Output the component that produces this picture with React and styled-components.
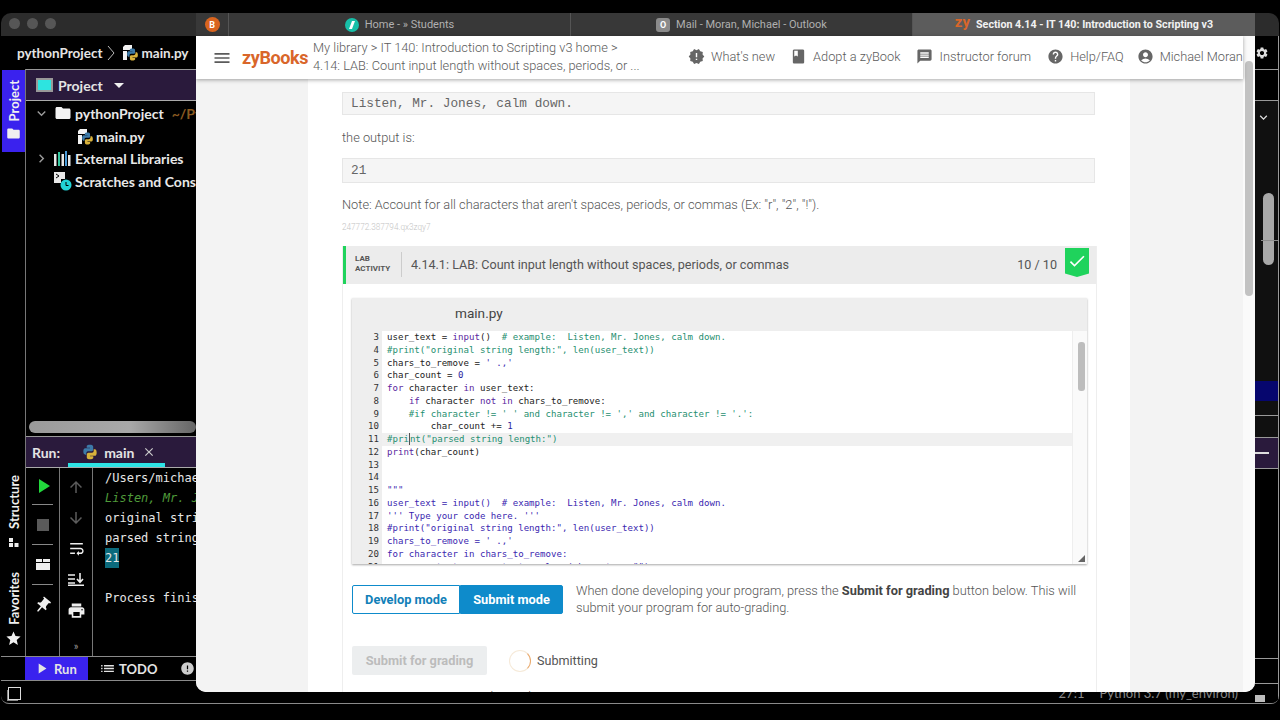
import React from "react";
import styled, { createGlobalStyle } from "styled-components";
import {
  MdNewReleases,
  MdBook,
  MdMessage,
  MdHelp,
  MdAccountCircle,
  MdSettings,
  MdMenu,
  MdCheck,
  MdStar,
  MdFolder,
  MdPushPin,
  MdPrint,
  MdArrowUpward,
  MdArrowDownward,
  MdWrapText,
  MdClose,
  MdKeyboardArrowDown,
  MdKeyboardArrowRight,
  MdError,
  MdPlayArrow,
  MdList,
} from "react-icons/md";

const GlobalStyle = createGlobalStyle`
  html, body { margin: 0; padding: 0; background: #000; }
  body { width: 1280px; height: 720px; overflow: hidden; font-family: "Roboto", sans-serif; }
`;

const Desktop = styled.div`
  position: relative;
  width: 1280px;
  height: 720px;
  background: #000;
  overflow: hidden;
`;

/* ---------- IDE window behind the browser ---------- */
const IdeWindow = styled.div`
  position: absolute;
  left: 1px;
  top: 13px;
  width: 1278px;
  height: 690px;
  border-bottom: 1px solid #8a8a8a;
  border-radius: 10px 10px 8px 8px;
  background: #000;
  display: flex;
  flex-direction: column;
  overflow: hidden;
  color: #e4e4e4;
  font-family: "Lato", sans-serif;
`;
const IdeTitle = styled.div`
  height: 23px;
  flex: none;
  box-sizing: border-box;
  padding: 0 0 2px 8px;
  background: #2c2c2c;
  display: flex;
  align-items: center;
  gap: 7px;
`;
const Dot = styled.span`
  width: 11px;
  height: 11px;
  border-radius: 50%;
  background: #565656;
`;
const IdeBody = styled.div`
  flex: 1;
  min-height: 0;
  display: flex;
`;
const LeftPane = styled.div`
  width: 195px;
  flex: none;
  display: flex;
  flex-direction: column;
  overflow: hidden;
`;
const Crumb = styled.div`
  height: 33px;
  flex: none;
  display: flex;
  align-items: center;
  padding-left: 16px;
  font-size: 13.5px;
  font-weight: 700;
  white-space: nowrap;
  & > svg { flex: none; }
`;
const CrumbFile = styled.span`
  margin-left: 2px;
`;
const IdeMain = styled.div`
  flex: 1;
  min-height: 0;
  display: flex;
`;
const Stripe = styled.div`
  width: 24px;
  flex: none;
  display: flex;
  flex-direction: column;
  padding-top: 1px;
  padding-left: 1px;
  box-sizing: border-box;
`;
const StripeTab = styled.div`
  display: flex;
  flex-direction: column;
  align-items: center;
  gap: ${(p) => p.$gap || 5}px;
  font-size: 13px;
  font-weight: 700;
  color: #f0f0f0;
  background: ${(p) => (p.$active ? "#3a22ee" : "transparent")};
  padding-top: ${(p) => (p.$active ? 10 : 0)}px;
  height: ${(p) => (p.$active ? "82px" : "auto")};
  box-sizing: border-box;
  margin-top: ${(p) => p.$mt || 0};
  margin-bottom: ${(p) => p.$mb || 0}px;
`;
const VerticalText = styled.span`
  writing-mode: vertical-rl;
  transform: rotate(180deg);
  line-height: 22px;
`;
const Panels = styled.div`
  flex: 1;
  min-width: 0;
  display: flex;
  flex-direction: column;
  border-left: 1px solid #777;
  border-top: 1px solid #999;
`;
const ProjectPanel = styled.div`
  flex: 1;
  min-height: 0;
  display: flex;
  flex-direction: column;
`;
const ProjectHead = styled.div`
  height: 30px;
  flex: none;
  background: #2a1a3c;
  border-bottom: 1px solid #aaa;
  display: flex;
  align-items: center;
  padding-left: 10px;
  font-size: 14px;
  font-weight: 700;
  white-space: nowrap;
`;
const WindowIcon = styled.span`
  width: 13px;
  height: 10px;
  background: #2de4e0;
  border: 2px solid #999;
  margin-right: 5px;
`;
const Caret = styled.span`
  width: 0;
  height: 0;
  border-left: 5px solid transparent;
  border-right: 5px solid transparent;
  border-top: 5px solid #f0f0f0;
  margin-left: 11px;
`;
const Tree = styled.div`
  flex: 1;
  padding-top: 1px;
`;
const TreeRow = styled.div`
  height: 22.7px;
  display: flex;
  align-items: center;
  font-size: 14px;
  font-weight: 700;
  white-space: nowrap;
  padding-left: ${(p) => p.$indent}px;
  color: #e8e8e8;
  & > svg { flex: none; }
`;
const TreeSlot = styled.span`
  width: 21px;
  flex: none;
  display: flex;
  color: #999;
`;
const TreeLabel = styled.span`
  margin-left: ${(p) => p.$ml}px;
`;
const Muted = styled.span`
  color: #8a5a20;
  margin-left: 8px;
`;
const HScroll = styled.div`
  height: 12px;
  flex: none;
  margin: 0 0 3px 3px;
  border-radius: 6px;
  background: linear-gradient(90deg, #9a9a9a 0%, #a8a8a8 60%, #666 100%);
`;
const RunPanel = styled.div`
  height: 219px;
  flex: none;
  display: flex;
  flex-direction: column;
  border-top: 1px solid #999;
`;
const RunHead = styled.div`
  height: 30px;
  flex: none;
  background: #2a1a3c;
  border-bottom: 1px solid #aaa;
  display: flex;
  align-items: center;
  padding-left: 6px;
  font-size: 14px;
  font-weight: 700;
  white-space: nowrap;
  position: relative;
`;
const RunTab = styled.div`
  display: flex;
  align-items: center;
  gap: 6px;
  margin-left: 22px;
`;
const RunUnderline = styled.span`
  position: absolute;
  left: 42px;
  bottom: 0;
  width: 97px;
  height: 4px;
  background: #2de4e6;
`;
const RunBody = styled.div`
  flex: 1;
  min-height: 0;
  display: flex;
`;
const ToolCol = styled.div`
  width: ${(p) => p.$w}px;
  flex: none;
  border-right: 1px solid #777;
  display: flex;
  flex-direction: column;
  align-items: center;
  padding-top: 4px;
  color: #eee;
`;
const ToolSlot = styled.div`
  height: ${(p) => p.$h}px;
  flex: none;
  margin-top: ${(p) => p.$mt || 0}px;
  display: flex;
  align-items: center;
  justify-content: center;
  color: ${(p) => p.$color || "inherit"};
`;
const ToolRule = styled.span`
  display: block;
  width: 21px;
  height: 1px;
  margin: 5px 0;
  background: #888;
`;
const StopBox = styled.span`
  width: 12px;
  height: 12px;
  background: #5a5a5a;
`;
const LayoutIcon = styled.span`
  width: 14px;
  height: 11px;
  display: grid;
  grid-template-columns: 1fr 1fr;
  grid-template-rows: 1fr 2fr;
  gap: 1px;
  & > i { background: #eee; display: block; }
  & > i:last-child { grid-column: 1 / 3; }
`;
const MoreMark = styled.span`
  font-size: 11px;
  color: #999;
`;
const Console = styled.div`
  flex: 1;
  padding-left: 12px;
  font-family: "DejaVu Sans Mono", monospace;
  font-size: 12px;
  line-height: 20px;
  white-space: pre;
  overflow: hidden;
  color: #e6e6e6;
`;
const ConsoleLine = styled.div`
  height: 20px;
  color: ${(p) => p.$color || "inherit"};
  font-style: ${(p) => (p.$italic ? "italic" : "normal")};
`;
const Selected = styled.span`
  background: #0c6a7c;
  display: inline-block;
`;
const ToolBar = styled.div`
  height: 23px;
  flex: none;
  border-top: 1px solid #8a8a8a;
  border-bottom: 1px solid #8a8a8a;
  display: flex;
  align-items: center;
  font-size: 13px;
  font-weight: 700;
  white-space: nowrap;
`;
const RunButton = styled.div`
  margin-left: 24px;
  width: 63px;
  flex: none;
  height: 100%;
  background: #3a22ee;
  display: flex;
  align-items: center;
  gap: 4px;
  padding-left: 8px;
  box-sizing: border-box;
`;
const TodoItem = styled.div`
  display: flex;
  align-items: center;
  gap: 3px;
  margin-left: ${(p) => p.$ml}px;
`;
const BottomBar = styled.div`
  height: 22px;
  flex: none;
  display: flex;
  align-items: center;
  padding-left: 7px;
`;
const SquareIcon = styled.span`
  width: 11px;
  height: 11px;
  border: 1px solid #ddd;
  margin-top: 2px;
  box-shadow: -2px 2px 0 -1px #888;
`;
const IdeFiller = styled.div`
  flex: 1;
  display: flex;
  justify-content: flex-end;
  align-items: flex-end;
  padding: 0 17px 2px 0;
  font-size: 13px;
  line-height: 16px;
  color: #8a8a8a;
  gap: 15px;
  white-space: nowrap;
`;
const RightStrip = styled.div`
  width: 24px;
  flex: none;
  display: flex;
  flex-direction: column;
  color: #ddd;
  border-right: 1px solid #999;
  box-sizing: border-box;
`;
const StripBlock = styled.div`
  height: ${(p) => p.$h}px;
  flex: none;
  background: ${(p) => p.$bg || "#000"};
  border-bottom: ${(p) => (p.$noLine ? "none" : "1px solid #999")};
  display: flex;
  position: relative;
  overflow: hidden;
`;
const StripThumb = styled.span`
  position: absolute;
  left: 8px;
  top: 92px;
  width: 11px;
  height: 72px;
  border-radius: 6px;
  background: #a8a8a8;
`;
const StripMark = styled.span`
  position: absolute;
  left: 6px;
  right: 0;
  top: 139px;
  height: 1px;
  background: #8c8c8c;
`;
const StripBlue = styled.span`
  position: absolute;
  left: 0;
  right: 0;
  top: 280px;
  height: 20px;
  background: #06066e;
`;
const StripDash = styled.span`
  width: 14px;
  height: 2px;
  background: #ddd;
  align-self: center;
`;
const LockBody = styled.span`
  width: 10px;
  height: 7px;
  margin: 11px 0 0 0;
  background: #bdbdbd;
`;

/* ---------- browser window ---------- */
const BrowserWindow = styled.div`
  position: absolute;
  left: 196px;
  top: 13px;
  width: 1059px;
  height: 679px;
  display: flex;
  flex-direction: column;
  border-radius: 0 0 10px 10px;
  overflow: hidden;
  background: #fff;
`;
const TabBar = styled.div`
  height: 23px;
  flex: none;
  display: flex;
  background: #383838;
  font-family: "Roboto", sans-serif;
  font-size: 11px;
  color: #b0b0b0;
`;
const PinnedTab = styled.div`
  width: 33px;
  flex: none;
  border-right: 1px solid #555;
  display: flex;
  align-items: center;
  justify-content: center;
  box-sizing: border-box;
`;
const BrowserTab = styled.div`
  width: 342px;
  flex: none;
  display: flex;
  align-items: center;
  justify-content: center;
  gap: 6px;
  box-sizing: border-box;
  border-right: ${(p) => (p.$last ? "none" : "1px solid #555")};
  background: ${(p) => (p.$active ? "#5c5c5c" : "transparent")};
  color: ${(p) => (p.$active ? "#f2f2f2" : "#b0b0b0")};
  font-weight: ${(p) => (p.$active ? 700 : 400)};
  font-size: ${(p) => (p.$active ? 10.7 : 11)}px;
  white-space: nowrap;
`;
const Favicon = styled.span`
  width: ${(p) => p.$size || 14}px;
  height: ${(p) => p.$size || 14}px;
  flex: none;
  display: flex;
  align-items: center;
  justify-content: center;
  color: #fff;
  font-size: 9px;
  font-weight: 700;
  background: ${(p) => p.$bg};
  border-radius: ${(p) => p.$radius || "50%"};
`;
const ZyMark = styled.span`
  color: #d9662a;
  font-size: 15px;
  font-weight: 700;
  margin-top: -5px;
`;
const BrowserContent = styled.div`
  flex: 1;
  min-height: 0;
  display: flex;
`;
const Page = styled.div`
  width: 1047px;
  flex: none;
  display: flex;
  flex-direction: column;
`;
const Nav = styled.div`
  height: 43px;
  flex: none;
  display: flex;
  align-items: center;
  padding-left: 16px;
  background: #fff;
  box-shadow: 0 1px 4px rgba(0, 0, 0, 0.35);
  position: relative;
  z-index: 2;
  overflow: hidden;
  color: #5b5b5b;
  font-size: 12.8px;
  font-weight: 300;
  white-space: nowrap;
  & > * { flex: none; }
`;
const Logo = styled.span`
  margin-left: 10px;
  width: 65px;
  color: #d9662a;
  font-size: 18px;
  font-weight: 700;
  letter-spacing: -0.4px;
`;
const NavCrumb = styled.div`
  margin: -2px 0 0 6px;
  width: 375px;
  line-height: 18px;
`;
const NavLinks = styled.div`
  display: flex;
  align-items: center;
  gap: 16px;
  margin-top: -2px;
`;
const NavLink = styled.div`
  display: flex;
  align-items: center;
  gap: 6px;
  margin-left: ${(p) => p.$ml || 0}px;
  & svg { color: #666; flex: none; }
`;
const Scrolled = styled.div`
  flex: 1;
  min-height: 0;
  display: grid;
  grid-template-columns: 112px 822px 113px;
  overflow: hidden;
`;
const Gutter = styled.div`
  background: #f3f3f3;
`;
const Center = styled.div`
  background: #fff;
  padding: 13px 0 0 34px;
  color: #5a5a5a;
  font-size: 12.8px;
  font-weight: 300;
`;
const OutputBox = styled.div`
  width: 753px;
  box-sizing: border-box;
  height: ${(p) => p.$h}px;
  background: #f5f5f5;
  border: 1px solid #e6e6e6;
  padding-left: 8px;
  display: flex;
  align-items: center;
  font-family: "Liberation Mono", monospace;
  font-size: 12.75px;
  color: #666;
`;
const Para = styled.p`
  margin: ${(p) => p.$m};
  line-height: 18px;
  font-weight: 300;
  color: #555;
`;
const TinyTag = styled.div`
  margin-top: 7px;
  font-size: 8.2px;
  line-height: 12px;
  color: #c4c4c4;
`;
const Activity = styled.div`
  margin-top: 13px;
  width: 755px;
  border-right: 1px solid #eee;
  border-left: 1px solid #eee;
  box-sizing: border-box;
`;
const ActivityHead = styled.div`
  height: 38px;
  box-sizing: border-box;
  padding: 0 0 2px 9px;
  background: #ececec;
  border-left: 3px solid #1fd35c;
  display: flex;
  align-items: center;
  color: #555;
`;
const LabTag = styled.div`
  width: 37px;
  flex: none;
  font-size: 8px;
  line-height: 10px;
  font-weight: 700;
  color: #555;
  padding-right: 9px;
  border-right: 1px solid #ccc;
  height: 25px;
  display: flex;
  align-items: center;
`;
const ActivityTitle = styled.div`
  margin-left: 9px;
  flex: 1;
  font-size: 12.6px;
  font-weight: 400;
`;
const Score = styled.div`
  font-size: 12.6px;
  font-weight: 400;
  margin-right: 8px;
`;
const Badge = styled.div`
  width: 24px;
  height: 29px;
  margin-right: 7px;
  align-self: flex-start;
  margin-top: 2px;
  background: #1fd35c;
  clip-path: polygon(0 0, 100% 0, 100% 88%, 50% 100%, 0 88%);
  display: flex;
  justify-content: center;
  padding-top: 3px;
  box-sizing: border-box;
  color: #fff;
`;
const ActivityBody = styled.div`
  padding: 14px 9px 0 9px;
`;
const Editor = styled.div`
  width: 735px;
  box-shadow: 0 1px 2px rgba(0, 0, 0, 0.35);
`;
const EditorHead = styled.div`
  height: 33px;
  box-sizing: border-box;
  background: #eee;
  padding: 0 0 4px 103px;
  display: flex;
  align-items: center;
  font-size: 13.6px;
  font-weight: 400;
  color: #444;
`;
const EditorBody = styled.div`
  height: 233px;
  display: flex;
  position: relative;
  overflow: hidden;
  background: #fff;
`;
const CodeLines = styled.div`
  flex: 1;
  min-width: 0;
  font-family: "DejaVu Sans Mono", monospace;
  font-size: 9.08px;
  overflow: hidden;
`;
const CodeLine = styled.div`
  height: 12.77px;
  line-height: 12.77px;
  display: flex;
  white-space: pre;
  background: ${(p) => (p.$active ? "#f0f0f0" : "transparent")};
`;
const LineNo = styled.span`
  width: 30px;
  flex: none;
  box-sizing: border-box;
  text-align: right;
  padding-right: 3px;
  color: #333;
  background: #eeeeee;
`;
const LineText = styled.span`
  padding-left: 5px;
  color: #222;
`;
const Tok = styled.span`
  color: ${(p) =>
    ({ k: "#5a1fa0", c: "#1f8f70", s: "#3a1fb0", n: "#2a1fa0", b: "#5a1fa0" })[p.$t]};
`;
const Cursor = styled.span`
  display: inline-block;
  width: 0;
  height: 12px;
  border-left: 1px solid #555;
  vertical-align: top;
`;
const CodeScroll = styled.div`
  width: 15px;
  flex: none;
  background: #fafafa;
  border-left: 1px solid #eee;
  padding: 11px 0 0 5px;
  box-sizing: border-box;
`;
const CodeThumb = styled.div`
  width: 7px;
  height: 49px;
  border-radius: 3px;
  background: #bdbdbd;
`;
const ResizeGrip = styled.svg`
  position: absolute;
  right: 2px;
  bottom: 2px;
`;
const ModeRow = styled.div`
  margin-top: 21px;
  display: flex;
  gap: 13px;
`;
const ModeToggle = styled.div`
  display: flex;
  height: 29px;
  width: 211px;
  flex: none;
  font-size: 12.8px;
  font-weight: 700;
`;
const ModeButton = styled.div`
  flex: ${(p) => (p.$on ? "0 0 103px" : "0 0 108px")};
  display: flex;
  align-items: center;
  justify-content: center;
  box-sizing: border-box;
  border: 1px solid #0e8bcb;
  border-radius: ${(p) => (p.$on ? "0 2px 2px 0" : "2px 0 0 2px")};
  background: ${(p) => (p.$on ? "#0e8bcb" : "#fff")};
  color: ${(p) => (p.$on ? "#fff" : "#1180b8")};
`;
const ModeHelp = styled.div`
  width: 505px;
  line-height: 17px;
  margin-top: -3px;
  color: #555;
  b { font-weight: 700; color: #444; }
`;
const SubmitRow = styled.div`
  margin-top: 30px;
  display: flex;
  align-items: center;
`;
const SubmitButton = styled.div`
  width: 135px;
  height: 29px;
  background: #eceeef;
  color: #bcbcbc;
  font-weight: 700;
  font-size: 12.8px;
  display: flex;
  align-items: center;
  justify-content: center;
  border-radius: 2px;
`;
const Spinner = styled.span`
  width: 22px;
  height: 22px;
  box-sizing: border-box;
  margin-left: 22px;
  border-radius: 50%;
  border: 1px solid #f6ead9;
  border-right-color: #e9a96c;
`;
const SubmitLabel = styled.span`
  margin-left: 6px;
  color: #555;
  font-weight: 400;
  font-size: 12.6px;
`;
const WhatIsThis = styled.div`
  margin: 14px 0 0 127px;
  color: #555;
  line-height: 16px;
`;
const PageTrack = styled.div`
  width: 12px;
  flex: none;
  background: #fafafa;
  padding: 25px 0 0 2px;
  box-sizing: border-box;
`;
const PageThumb = styled.div`
  width: 8px;
  height: 235px;
  border-radius: 4px;
  background: #c2c2c2;
`;

const PY_PATH =
  "M11.9 1C6.8 1 7.1 3.2 7.1 3.2v2.3h4.9v.7H5.2S2 5.8 2 11s2.8 5 2.8 5h1.7v-2.4s-.1-2.8 2.8-2.8h4.8s2.7 0 2.7-2.6V4.2S17.2 1 11.9 1z";

const PythonIcon = ({ size = 16 }) => (
  <svg width={size} height={size} viewBox="0 0 24 24">
    <path fill="#3d7aa8" d={PY_PATH} />
    <path fill="#d8b23c" transform="rotate(180 12 12)" d={PY_PATH} />
  </svg>
);

const PyFile = () => (
  <svg width="17" height="17" viewBox="0 0 17 17">
    <path fill="#f2f2f2" d="M3 1h7v5H1V3zM1 7h4v9H1z" />
    <g transform="translate(4 4) scale(0.54)">
      <path fill="#3d7aa8" d={PY_PATH} />
      <path fill="#d8b23c" transform="rotate(180 12 12)" d={PY_PATH} />
    </g>
  </svg>
);

const ThinChevron = () => (
  <svg width="8" height="16" viewBox="0 0 8 16" fill="none" stroke="#bbb" strokeWidth="1" style={{ margin: "0 7px 0 5px" }}>
    <path d="M1 1l6 7-6 7" />
  </svg>
);

const LibIcon = () => (
  <svg width="17" height="15" viewBox="0 0 17 15" fill="#e8e8e8">
    <rect x="0" y="3" width="2.5" height="12" />
    <rect x="4" y="1" width="2" height="14" fill="#35c9a0" />
    <rect x="7.5" y="3" width="2.5" height="12" />
    <rect x="11" y="0" width="2" height="15" fill="#4a9ad8" />
    <rect x="14" y="4" width="2.5" height="11" />
  </svg>
);

const ScratchIcon = () => (
  <svg width="18" height="19" viewBox="0 0 18 19">
    <path fill="#e8e8e8" d="M0 0h11v7H7v4H0z" />
    <path d="M2 2l3 2-3 2" stroke="#000" strokeWidth="1" fill="none" />
    <circle cx="12" cy="13" r="5.5" fill="#22d3d6" />
    <path d="M12 10v3.5h2.5" stroke="#000" strokeWidth="1" fill="none" />
  </svg>
);

const ScrollEndIcon = () => (
  <svg width="16" height="13" viewBox="0 0 16 13" fill="none" stroke="#eee" strokeWidth="1.6">
    <path d="M0 2h7M0 6h7M0 10h7M0 12.2h16M12 0v9M9 6l3 3.4L15 6" />
  </svg>
);

const CODE = [
  [3, [["", "user_text = "], ["b", "input"], ["", "()  "], ["c", "# example:  Listen, Mr. Jones, calm down."]]],
  [4, [["c", '#print("original string length:", len(user_text))']]],
  [5, [["", "chars_to_remove = "], ["s", "' .,'"]]],
  [6, [["", "char_count = "], ["n", "0"]]],
  [7, [["k", "for"], ["", " character "], ["k", "in"], ["", " user_text:"]]],
  [8, [["", "    "], ["k", "if"], ["", " character "], ["k", "not in"], ["", " chars_to_remove:"]]],
  [9, [["c", "    #if character != ' ' and character != ',' and character != '.':"]]],
  [10, [["", "        char_count += "], ["n", "1"]]],
  [11, [["c", "#pri"], ["cursor", ""], ["c", 'nt("parsed string length:")']], true],
  [12, [["b", "print"], ["", "(char_count)"]]],
  [13, []],
  [14, []],
  [15, [["s", '"""']]],
  [16, [["s", "user_text = input()  # example:  Listen, Mr. Jones, calm down."]]],
  [17, [["s", "''' Type your code here. '''"]]],
  [18, [["s", '#print("original string length:", len(user_text))']]],
  [19, [["s", "chars_to_remove = ' .,'"]]],
  [20, [["s", "for character in chars_to_remove:"]]],
  [21, [["s", '    user_text = user_text.replace(character, "")']]],
];

const Ide = () => (
  <IdeWindow>
    <IdeTitle>
      <Dot />
      <Dot />
      <Dot />
    </IdeTitle>
    <IdeBody>
      <LeftPane>
        <Crumb>
          pythonProject
          <ThinChevron />
          <PyFile />
          <CrumbFile>main.py</CrumbFile>
        </Crumb>
        <IdeMain>
          <Stripe>
            <StripeTab $active>
              <VerticalText>Project</VerticalText>
              <MdFolder size={15} />
            </StripeTab>
            <StripeTab $mt="auto" $mb={25} $gap={9}>
              <VerticalText>Structure</VerticalText>
              <svg width="10" height="9" viewBox="0 0 10 9" fill="#eee">
                <rect x="0" y="0" width="4" height="4" />
                <rect x="0" y="5" width="4" height="4" />
                <rect x="5.5" y="5" width="4" height="4" />
              </svg>
            </StripeTab>
            <StripeTab $mb={9}>
              <VerticalText>Favorites</VerticalText>
              <MdStar size={17} />
            </StripeTab>
          </Stripe>
          <Panels>
            <ProjectPanel>
              <ProjectHead>
                <WindowIcon />
                Project
                <Caret />
              </ProjectHead>
              <Tree>
                <TreeRow $indent={7}>
                  <TreeSlot>
                    <MdKeyboardArrowDown size={17} />
                  </TreeSlot>
                  <MdFolder size={18} color="#f2f2f2" />
                  <TreeLabel $ml={3}>pythonProject</TreeLabel>
                  <Muted>~/PycharmProjects</Muted>
                </TreeRow>
                <TreeRow $indent={51}>
                  <PyFile />
                  <TreeLabel $ml={2}>main.py</TreeLabel>
                </TreeRow>
                <TreeRow $indent={7}>
                  <TreeSlot>
                    <MdKeyboardArrowRight size={17} />
                  </TreeSlot>
                  <LibIcon />
                  <TreeLabel $ml={4}>External Libraries</TreeLabel>
                </TreeRow>
                <TreeRow $indent={28}>
                  <ScratchIcon />
                  <TreeLabel $ml={3}>Scratches and Consoles</TreeLabel>
                </TreeRow>
              </Tree>
              <HScroll />
            </ProjectPanel>
            <RunPanel>
              <RunHead>
                Run:
                <RunTab>
                  <PythonIcon />
                  main
                  <MdClose size={14} color="#ccc" style={{ marginLeft: 2 }} />
                </RunTab>
                <RunUnderline />
              </RunHead>
              <RunBody>
                <ToolCol $w={33}>
                  <ToolSlot $h={27} $color="#22d83c">
                    <MdPlayArrow size={24} />
                  </ToolSlot>
                  <ToolRule />
                  <ToolSlot $h={29}>
                    <StopBox />
                  </ToolSlot>
                  <ToolRule />
                  <ToolSlot $h={29}>
                    <LayoutIcon>
                      <i />
                      <i />
                      <i />
                    </LayoutIcon>
                  </ToolSlot>
                  <ToolRule />
                  <ToolSlot $h={31}>
                    <MdPushPin size={19} style={{ transform: "rotate(40deg)" }} />
                  </ToolSlot>
                </ToolCol>
                <ToolCol $w={32}>
                  <ToolSlot $h={30} $color="#5c5c5c">
                    <MdArrowUpward size={18} />
                  </ToolSlot>
                  <ToolSlot $h={31} $color="#5c5c5c">
                    <MdArrowDownward size={18} />
                  </ToolSlot>
                  <ToolSlot $h={31}>
                    <MdWrapText size={19} />
                  </ToolSlot>
                  <ToolSlot $h={31}>
                    <ScrollEndIcon />
                  </ToolSlot>
                  <ToolSlot $h={31}>
                    <MdPrint size={19} />
                  </ToolSlot>
                  <ToolSlot $h={14} $mt={12}>
                    <MoreMark>»</MoreMark>
                  </ToolSlot>
                </ToolCol>
                <Console>
                  <ConsoleLine>/Users/michaelmoran/PycharmProjects</ConsoleLine>
                  <ConsoleLine $color="#4f9a3a" $italic>
                    Listen, Mr. Jones, calm down.
                  </ConsoleLine>
                  <ConsoleLine>original string length: 29</ConsoleLine>
                  <ConsoleLine>parsed string length:</ConsoleLine>
                  <ConsoleLine>
                    <Selected>21</Selected>
                  </ConsoleLine>
                  <ConsoleLine />
                  <ConsoleLine>Process finished with exit code 0</ConsoleLine>
                </Console>
              </RunBody>
            </RunPanel>
          </Panels>
        </IdeMain>
        <ToolBar>
          <RunButton>
            <MdPlayArrow size={17} />
            Run
          </RunButton>
          <TodoItem $ml={11}>
            <MdList size={17} />
            TODO
          </TodoItem>
          <TodoItem $ml={23}>
            <MdError size={15} color="#ccc" />
          </TodoItem>
        </ToolBar>
        <BottomBar>
          <SquareIcon />
        </BottomBar>
      </LeftPane>
      <IdeFiller>
        <span>27:1</span>
        <span>Python 3.7 (my_environ)</span>
      </IdeFiller>
      <RightStrip>
        <StripBlock $h={33}>
          <MdSettings size={14} style={{ marginTop: 10 }} />
        </StripBlock>
        <StripBlock $h={30} />
        <StripBlock $h={314} $bg="#101010">
          <MdKeyboardArrowDown size={15} style={{ margin: "9px 0 0 1px" }} />
          <StripThumb />
          <StripMark />
          <StripBlue />
        </StripBlock>
        <StripBlock $h={21} $bg="#101010" />
        <StripBlock $h={30} $bg="#2a1a3c">
          <StripDash />
        </StripBlock>
        <StripBlock $h={189} />
        <StripBlock $h={24} />
        <StripBlock $h={22} $noLine>
          <LockBody />
        </StripBlock>
      </RightStrip>
    </IdeBody>
  </IdeWindow>
);

const Browser = () => (
  <BrowserWindow>
    <TabBar>
      <PinnedTab>
        <Favicon $bg="#d9641e" $size={15}>
          B
        </Favicon>
      </PinnedTab>
      <BrowserTab>
        <Favicon $bg="#17bfa8">
          <svg width="8" height="10" viewBox="0 0 8 10">
            <path d="M1 9l3-8h3L4 9z" fill="#fff" />
          </svg>
        </Favicon>
        Home - » Students
      </BrowserTab>
      <BrowserTab>
        <Favicon $bg="#8b8b8b" $radius="3px">
          O
        </Favicon>
        Mail - Moran, Michael - Outlook
      </BrowserTab>
      <BrowserTab $active $last>
        <ZyMark>zy</ZyMark>
        Section 4.14 - IT 140: Introduction to Scripting v3
      </BrowserTab>
    </TabBar>
    <BrowserContent>
      <Page>
        <Nav>
          <MdMenu size={20} />
          <Logo>zyBooks</Logo>
          <NavCrumb>
            My library &gt; IT 140: Introduction to Scripting v3 home &gt;
            <br />
            4.14: LAB: Count input length without spaces, periods, or ...
          </NavCrumb>
          <NavLinks>
            <NavLink>
              <MdNewReleases size={17} />
              What's new
            </NavLink>
            <NavLink $ml={-1}>
              <MdBook size={17} />
              Adopt a zyBook
            </NavLink>
            <NavLink>
              <MdMessage size={17} />
              Instructor forum
            </NavLink>
            <NavLink>
              <MdHelp size={17} />
              Help/FAQ
            </NavLink>
            <NavLink $ml={-3}>
              <MdAccountCircle size={17} />
              Michael Moran
            </NavLink>
          </NavLinks>
        </Nav>
        <Scrolled>
          <Gutter />
          <Center>
            <OutputBox $h={23}>Listen, Mr. Jones, calm down.</OutputBox>
            <Para $m="14px 0 11px">the output is:</Para>
            <OutputBox $h={25}>21</OutputBox>
            <Para $m="13px 0 0">
              Note: Account for all characters that aren't spaces, periods, or commas (Ex: "r", "2", "!").
            </Para>
            <TinyTag>247772.387794.qx3zqy7</TinyTag>
            <Activity>
              <ActivityHead>
                <LabTag>
                  LAB
                  <br />
                  ACTIVITY
                </LabTag>
                <ActivityTitle>4.14.1: LAB: Count input length without spaces, periods, or commas</ActivityTitle>
                <Score>10 / 10</Score>
                <Badge>
                  <MdCheck size={20} />
                </Badge>
              </ActivityHead>
              <ActivityBody>
                <Editor>
                  <EditorHead>main.py</EditorHead>
                  <EditorBody>
                    <CodeLines>
                      {CODE.map(([no, toks, active]) => (
                        <CodeLine key={no} $active={active}>
                          <LineNo>{no}</LineNo>
                          <LineText>
                            {toks.map(([t, text], i) =>
                              t === "cursor" ? (
                                <Cursor key={i} />
                              ) : t ? (
                                <Tok key={i} $t={t}>
                                  {text}
                                </Tok>
                              ) : (
                                <span key={i}>{text}</span>
                              )
                            )}
                          </LineText>
                        </CodeLine>
                      ))}
                    </CodeLines>
                    <CodeScroll>
                      <CodeThumb />
                    </CodeScroll>
                    <ResizeGrip width="7" height="7" viewBox="0 0 7 7">
                      <path d="M0 7L7 0v7z" fill="#666" />
                    </ResizeGrip>
                  </EditorBody>
                </Editor>
                <ModeRow>
                  <ModeToggle>
                    <ModeButton>Develop mode</ModeButton>
                    <ModeButton $on>Submit mode</ModeButton>
                  </ModeToggle>
                  <ModeHelp>
                    When done developing your program, press the <b>Submit for grading</b> button below. This will
                    submit your program for auto-grading.
                  </ModeHelp>
                </ModeRow>
                <SubmitRow>
                  <SubmitButton>Submit for grading</SubmitButton>
                  <Spinner />
                  <SubmitLabel>Submitting</SubmitLabel>
                </SubmitRow>
                <WhatIsThis>What is this?</WhatIsThis>
              </ActivityBody>
            </Activity>
          </Center>
          <Gutter />
        </Scrolled>
      </Page>
      <PageTrack>
        <PageThumb />
      </PageTrack>
    </BrowserContent>
  </BrowserWindow>
);

const App = () => (
  <Desktop>
    <GlobalStyle />
    <Ide />
    <Browser />
  </Desktop>
);

export default App;
